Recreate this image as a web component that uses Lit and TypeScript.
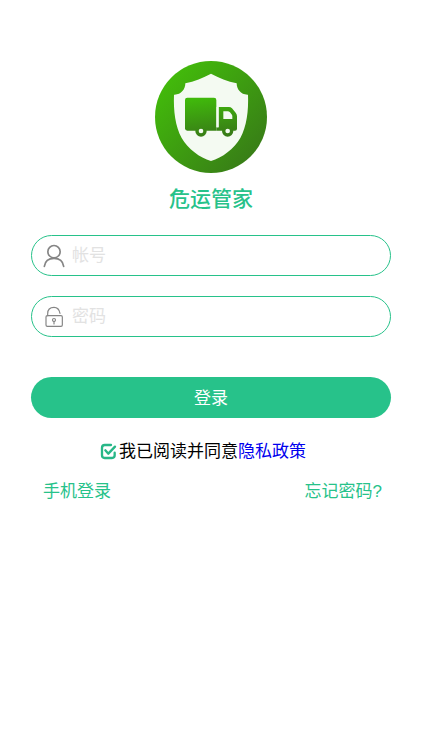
import { LitElement, html, css, svg } from "lit";
import { customElement, property, state } from "lit/decorators.js";

const userIcon = svg`
  <circle cx="33" cy="23" r="18.5" stroke-width="5"></circle>
  <path d="M4 67C6 52 17 43 33 43S60 52 62 67" stroke-width="5"></path>`;

const lockIcon = svg`
  <rect x="9" y="32" width="49" height="32" rx="4" stroke-width="3.5"></rect>
  <path d="M14 32V26C14 14 22 7 33 7C42 7 49 14 51 25" stroke-width="3.5"></path>
  <circle cx="33" cy="45" r="4.5" stroke-width="3.5"></circle>
  <path d="M33 49V57" stroke-width="3.5"></path>`;

@customElement("login-field")
class LoginField extends LitElement {
  @property() label = "";
  @property() type = "text";
  @property() icon = "user";

  static styles = css`
    :host {
      display: block;
    }
    .field {
      display: flex;
      align-items: center;
      gap: 7px;
      height: 41px;
      box-sizing: border-box;
      padding: 0 20px 0 11px;
      border: 1px solid #27c28a;
      border-radius: 21px;
    }
    .icon {
      flex: none;
      width: 22px;
      height: 24px;
      fill: none;
      stroke: #858585;
      stroke-linecap: round;
    }
    .input {
      flex: 1;
      min-width: 0;
      padding: 0;
      border: 0;
      outline: 0;
      background: none;
      color: #333;
      font: inherit;
    }
    .input::placeholder {
      color: #e2e2e2;
      opacity: 1;
    }
  `;

  render() {
    return html`
      <label class="field">
        <svg class="icon" viewBox="0 0 66 72" aria-hidden="true">
          ${this.icon === "lock" ? lockIcon : userIcon}
        </svg>
        <input class="input" type=${this.type} placeholder=${this.label} aria-label=${this.label} />
      </label>
    `;
  }
}

@customElement("app-root")
class AppRoot extends LitElement {
  @state() private agreed = true;

  static styles = css`
    :host {
      display: block;
      min-height: 100vh;
      box-sizing: border-box;
      padding: 61px 31px 40px;
      background: #fff;
      color: #000;
      font: 17px/24px "Liberation Sans", "Noto Sans CJK SC", sans-serif;
    }
    .brand {
      display: flex;
      flex-direction: column;
      align-items: center;
      gap: 12px;
    }
    .logo {
      width: 112px;
      height: 112px;
    }
    .title {
      margin: 0;
      color: #27c28a;
      font-size: 21px;
      line-height: 28px;
      font-weight: 500;
    }
    .form {
      display: flex;
      flex-direction: column;
      gap: 20px;
      margin-top: 22px;
    }
    .submit {
      height: 41px;
      margin-top: 20px;
      padding: 2px 0 0;
      border: 0;
      border-radius: 21px;
      background: #27c28a;
      color: #fff;
      font: inherit;
      cursor: pointer;
    }
    .consent {
      display: flex;
      justify-content: center;
      align-items: center;
      gap: 2px;
      margin-right: 16px;
    }
    .terms {
      padding-top: 2px;
    }
    .check {
      display: grid;
      width: 17px;
      height: 17px;
    }
    .box,
    .mark {
      grid-area: 1 / 1;
      width: 17px;
      height: 17px;
      margin: 0;
    }
    .box {
      appearance: none;
      cursor: pointer;
    }
    .mark {
      pointer-events: none;
      fill: none;
      stroke: #27b787;
      stroke-linecap: round;
      stroke-linejoin: round;
    }
    .policy {
      color: #00e;
      text-decoration: none;
    }
    .links {
      display: flex;
      justify-content: space-between;
      margin: 16px 9px 0 12px;
    }
    .link {
      color: #27c28a;
      text-decoration: none;
    }
  `;

  private toggle(e: Event) {
    this.agreed = (e.target as HTMLInputElement).checked;
  }

  render() {
    return html`
      <header class="brand">
        <svg class="logo" viewBox="0 0 336 336" aria-hidden="true">
          <defs>
            <linearGradient id="disc" x1="0.1" y1="0.2" x2="0.85" y2="0.9">
              <stop offset="0" stop-color="#42b90b"></stop>
              <stop offset="1" stop-color="#387d17"></stop>
            </linearGradient>
            <linearGradient id="truck" gradientUnits="userSpaceOnUse" x1="150" y1="110" x2="165" y2="228">
              <stop offset="0" stop-color="#40b90b"></stop>
              <stop offset="1" stop-color="#387b17"></stop>
            </linearGradient>
          </defs>
          <circle cx="168" cy="168" r="168" fill="url(#disc)"></circle>
          <path
            fill="#f4faf2"
            d="M168 38C144 51 118 61 91 67C91 85 78 102 57 101C55 150 61 195 80 231C99 264 134 290 168 300C202 290 237 264 256 231C275 195 281 150 279 101C258 102 245 85 245 67C218 61 192 51 168 38Z"
          ></path>
          <g fill="url(#truck)">
            <path d="M97 110H177Q184 110 184 117V209H97Q90 209 90 202V117Q90 110 97 110Z"></path>
            <path
              fill-rule="evenodd"
              d="M191 138H222Q227 138 231 142L242 155Q246 160 246 166V203Q246 209 240 209H184V199H191ZM205 151V174H232V166Q232 162 229 159L225 154Q222 151 218 151Z"
            ></path>
            <circle cx="138" cy="210" r="17"></circle>
            <circle cx="218" cy="210" r="17"></circle>
          </g>
          <path d="M187.5 138V199" stroke="#f4faf2" stroke-width="6"></path>
          <circle cx="138" cy="210" r="7" fill="#f4faf2"></circle>
          <circle cx="218" cy="210" r="7" fill="#f4faf2"></circle>
        </svg>
        <h1 class="title">危运管家</h1>
      </header>

      <form class="form" @submit=${(e: Event) => e.preventDefault()}>
        <login-field label="帐号" icon="user"></login-field>
        <login-field label="密码" icon="lock" type="password"></login-field>
        <button class="submit" type="submit">登录</button>
        <div class="consent">
          <span class="check">
            <input class="box" id="agree" type="checkbox" .checked=${this.agreed} @change=${this.toggle} />
            <svg class="mark" viewBox="0 0 51 51" aria-hidden="true">
              <path d="M33 6H14Q6 6 6 14V37Q6 45 14 45H36Q44 45 44 37V29" stroke-width="7"></path>
              ${this.agreed ? svg`<path d="M16 22L25 32L45 11" stroke-width="7"></path>` : ""}
            </svg>
          </span>
          <span class="terms"
            ><label for="agree">我已阅读并同意</label><a class="policy" href="#privacy">隐私政策</a></span
          >
        </div>
      </form>

      <nav class="links">
        <a class="link" href="#phone">手机登录</a>
        <a class="link" href="#forgot">忘记密码?</a>
      </nav>
    `;
  }
}
